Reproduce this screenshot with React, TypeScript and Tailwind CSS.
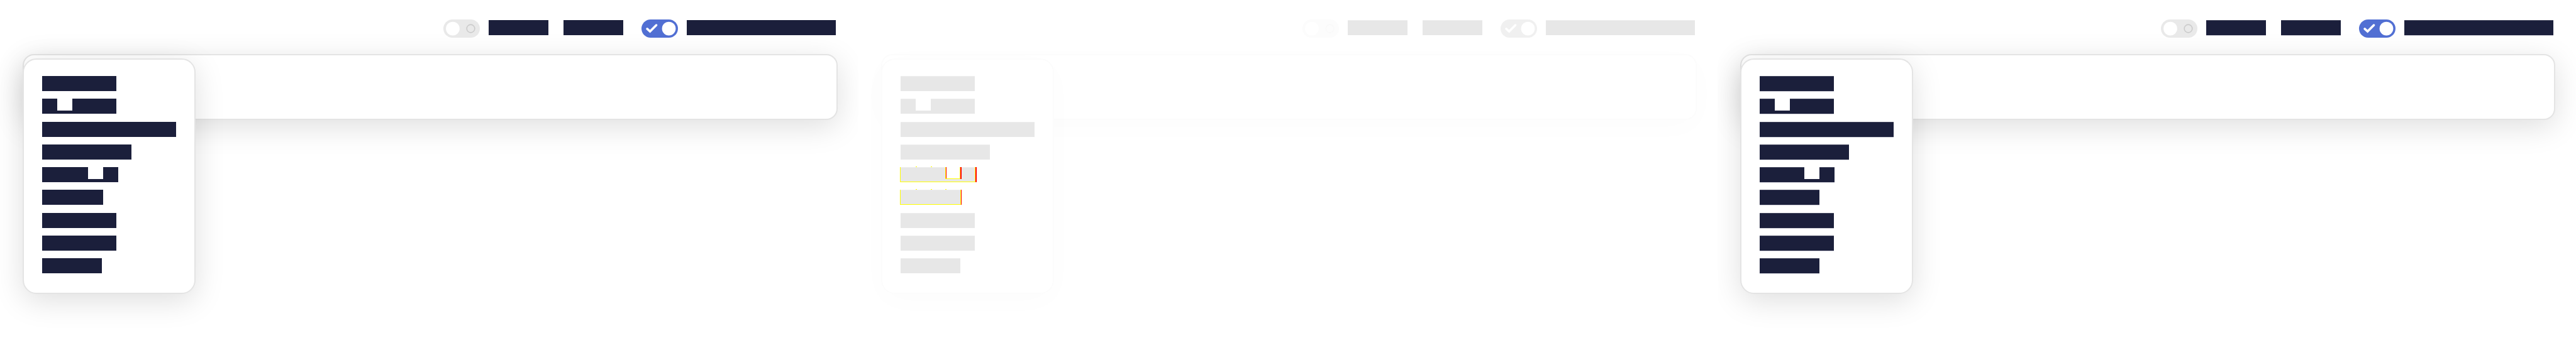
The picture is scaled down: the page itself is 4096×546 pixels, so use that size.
import { clsx } from "clsx";

type Tone = "plain" | "faded" | "outlined";

const barTone: Record<Tone, string> = {
  plain: "bg-[#1b1f3b]",
  faded: "bg-[#e7e7e7] border-t border-[#ededed]",
  outlined: "bg-[#1b1f3b] border-t border-[#43465d] shadow-[0_1px_0_#cfd0d9]",
};

const edge: Record<Tone, string> = {
  plain: "border-[#e4e4e4] shadow-[0_11px_48px_rgba(0,0,0,0.13)]",
  faded: "border-[#fcfcfc] shadow-[0_11px_48px_rgba(0,0,0,0.016)]",
  outlined: "border-[#e4e4e4] shadow-[0_11px_48px_rgba(0,0,0,0.13)]",
};

function Bar({ tone, width }: { tone: Tone; width: string }) {
  return <span className={clsx("block h-6 shrink-0", width, barTone[tone])} />;
}

function Toggle({ tone, on, label }: { tone: Tone; on: boolean; label: string }) {
  const faded = tone === "faded";
  const track = on ? (faded ? "bg-[#f0f0f0]" : "bg-[#516fd3]") : faded ? "bg-[#fcfcfc]" : "bg-[#e9e9e9]";
  return (
    <span className="relative block h-[29px] w-[58px] shrink-0">
      <input
        type="checkbox"
        role="switch"
        aria-label={label}
        defaultChecked={on}
        className={clsx("block h-full w-full appearance-none rounded-full", track)}
      />
      <svg viewBox="0 0 64 32" className="pointer-events-none absolute inset-0 h-full w-full" aria-hidden="true">
        {on ? (
          <>
            <path d="M10 16.5 L15 21 L26 10" fill="none" stroke="#fff" strokeWidth="4" strokeLinecap="round" strokeLinejoin="miter" />
            <circle cx="48" cy="16" r="12" fill="#fff" />
          </>
        ) : (
          <>
            <circle cx="16.5" cy="16" r="12" fill="#fff" />
            <circle cx="48" cy="16" r="7" fill="none" stroke={faded ? "#f9f9f9" : "#cbcbcb"} strokeWidth="1.8" />
          </>
        )}
      </svg>
    </span>
  );
}

function Notch({ left }: { left: string }) {
  return <span className={clsx("absolute -top-px h-5 w-6 bg-white", left)} />;
}

function Marks({ notched }: { notched: boolean }) {
  return (
    <>
      <span className="absolute -left-px top-0 h-6 w-px bg-[#ff0]" />
      <span className={clsx("absolute -left-px bottom-0 h-px bg-[#ff0]", notched ? "w-[120px]" : "w-24")} />
      <span className="absolute -top-px left-6 h-px w-0.5 bg-[#ff0]" />
      <span className="absolute -top-px left-12 h-px w-0.5 bg-[#ff0]" />
      {notched ? (
        <>
          <span className="absolute left-[71px] top-0 h-[19px] w-px bg-[#ff0]" />
          <span className="absolute left-[72px] top-0 h-[18px] w-px bg-[#f00]" />
          <span className="absolute left-[72px] top-[18px] h-px w-[22px] bg-[#ff0]" />
          <span className="absolute left-[94px] top-0 h-[19px] w-px bg-[#ff0]" />
          <span className="absolute left-[95px] top-0 h-[19px] w-0.5 bg-[#f00]" />
          <span className="absolute left-[118px] top-0 h-6 w-px bg-[#ff0]" />
          <span className="absolute left-[119px] top-0 h-6 w-0.5 bg-[#f00]" />
        </>
      ) : (
        <>
          <span className="absolute -top-px left-[71px] h-px w-0.5 bg-[#ff0]" />
          <span className="absolute left-[95px] top-0 h-6 w-px bg-[#ff0]" />
          <span className="absolute left-24 top-0 h-6 w-px bg-[#f00]" />
        </>
      )}
    </>
  );
}

function Menu({ tone }: { tone: Tone }) {
  const shifted = tone === "outlined";
  const rows = [
    { width: "w-[118px]" },
    { width: "w-[118px]", notch: "left-6" },
    { width: "w-[213px]" },
    { width: "w-[142px]" },
    { width: shifted ? "w-[119px]" : "w-[121px]", notch: shifted ? "left-[71px]" : "left-[73px]", marked: true },
    { width: shifted ? "w-[95px]" : "w-[97px]", marked: true },
    { width: "w-[118px]" },
    { width: "w-[118px]" },
    { width: "w-[95px]" },
  ];
  return (
    <ul
      className={clsx(
        "absolute -left-0.5 top-[5px] flex h-[375px] w-[275px] flex-col justify-between rounded-[22px] border-2 bg-white pb-[31px] pl-[29px] pt-[26px]",
        edge[tone],
      )}
    >
      {rows.map((row, i) => (
        <li key={i} className="relative">
          <Bar tone={tone} width={row.width} />
          {row.notch && <Notch left={row.notch} />}
          {row.marked && tone === "faded" && <Marks notched={Boolean(row.notch)} />}
        </li>
      ))}
    </ul>
  );
}

function Panel({ tone }: { tone: Tone }) {
  return (
    <section className="relative overflow-hidden bg-white pl-9 pr-[33px] pt-[31px]">
      <header className="relative z-10 flex items-start justify-end pr-[3px]">
        <Toggle tone={tone} on={false} label="First option" />
        <div className="ml-3.5 flex gap-6 pt-px">
          <Bar tone={tone} width="w-[95px]" />
          <Bar tone={tone} width="w-[95px]" />
        </div>
        <div className="ml-[29px] flex gap-3.5">
          <Toggle tone={tone} on label="Second option" />
          <div className="pt-px">
            <Bar tone={tone} width="w-[237px]" />
          </div>
        </div>
      </header>
      <div className={clsx("relative mt-[26px] h-[105px] rounded-[18px] border-2 bg-white", edge[tone])}>
        <Menu tone={tone} />
      </div>
    </section>
  );
}

export default function App() {
  return (
    <main className="grid min-h-screen grid-cols-3 bg-white">
      <Panel tone="plain" />
      <Panel tone="faded" />
      <Panel tone="outlined" />
    </main>
  );
}
